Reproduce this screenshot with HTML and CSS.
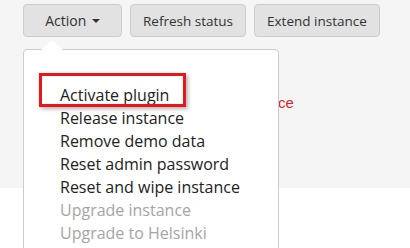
FILE: index.html
```html
<!DOCTYPE html>
<html lang="en">
<head>
    <meta charset="UTF-8">
    <title>Instance actions</title>
    <link rel="stylesheet" href="styles.css">
</head>
<body>
    <div class="panel">
        <div class="toolbar">
            <div class="action-wrap">
                <button class="btn">Action <span class="caret"></span></button>
                <ul class="dropdown">
                    <li class="highlight">Activate plugin</li>
                    <li>Release instance</li>
                    <li>Remove demo data</li>
                    <li>Reset admin password</li>
                    <li>Reset and wipe instance</li>
                    <li class="disabled">Upgrade instance</li>
                    <li class="disabled">Upgrade to Helsinki</li>
                </ul>
            </div>
            <button class="btn">Refresh status</button>
            <button class="btn">Extend instance</button>
        </div>
        <p class="status">Could not reach instance</p>
    </div>
</body>
</html>
```

FILE: styles.css
```css
* {
    margin: 0;
    padding: 0;
    box-sizing: border-box;
}

body {
    background: white;
    min-height: 248px;
    font-family: 'Open Sans', sans-serif;
    color: #222;
}

.panel {
    background: #f5f5f5;
    height: 188px;
    padding: 4px 23px 0;
}

.toolbar {
    display: flex;
    gap: 8px;
}

.action-wrap {
    position: relative;
}

.btn {
    flex-shrink: 0;
    height: 33px;
    padding: 0 12px;
    white-space: nowrap;
    background: #e2e2e2;
    border: 1px solid #ccc;
    border-radius: 4px;
    font-family: 'Open Sans', sans-serif;
    font-size: 13.5px;
    color: #333;
}

.action-wrap .btn {
    width: 99px;
    font-size: 14px;
}

.caret {
    display: inline-block;
    width: 0;
    height: 0;
    margin-left: 2px;
    vertical-align: 3px;
    border-left: 4px solid transparent;
    border-right: 4px solid transparent;
    border-top: 4px solid #333;
}

.dropdown {
    position: absolute;
    top: 45px;
    left: 0;
    width: 256px;
    height: 210px;
    list-style: none;
    background: white;
    border: 1px solid #ccc;
    border-radius: 4px;
    padding: 34px 0 0 36px;
    z-index: 2;
}

.dropdown::before {
    content: "";
    position: absolute;
    top: -10px;
    left: 17px;
    border-left: 11px solid transparent;
    border-right: 11px solid transparent;
    border-bottom: 10px solid white;
}

.dropdown li {
    font-size: 16px;
    line-height: 23px;
    color: #222;
    position: relative;
    white-space: nowrap;
}

.dropdown li.disabled {
    color: #a5a5a5;
}

.highlight::after {
    content: "";
    box-sizing: border-box;
    position: absolute;
    left: -21px;
    top: -11px;
    width: 147px;
    height: 34px;
    border: 3px solid #e8161c;
    box-shadow: 2px 2px 4px rgba(0, 0, 0, 0.3);
}

.status {
    margin-top: 57px;
    margin-left: 105px;
    font-family: 'Liberation Sans', sans-serif;
    font-size: 15px;
    color: #d7262e;
}
```
